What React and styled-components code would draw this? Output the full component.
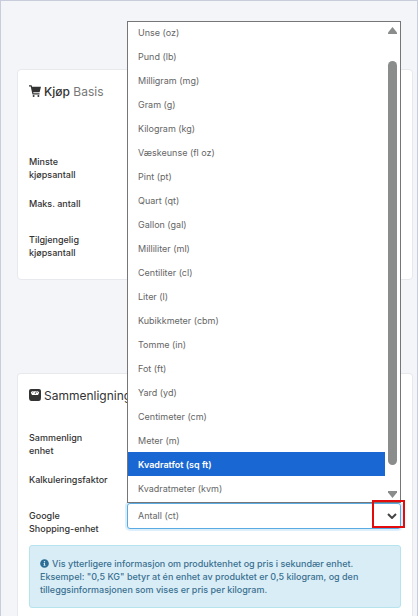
import React, { useState } from 'react';
import styled, { createGlobalStyle } from 'styled-components';
import { FaInfoCircle } from 'react-icons/fa';

const units = [
    'Unse (oz)',
    'Pund (lb)',
    'Milligram (mg)',
    'Gram (g)',
    'Kilogram (kg)',
    'Væskeunse (fl oz)',
    'Pint (pt)',
    'Quart (qt)',
    'Gallon (gal)',
    'Milliliter (ml)',
    'Centiliter (cl)',
    'Liter (l)',
    'Kubikkmeter (cbm)',
    'Tomme (in)',
    'Fot (ft)',
    'Yard (yd)',
    'Centimeter (cm)',
    'Meter (m)',
    'Kvadratfot (sq ft)',
    'Kvadratmeter (kvm)',
];

const CartIcon = () => (
    <svg width="12" height="12" viewBox="0 0 12 12" fill="#333" aria-hidden="true">
        <path d="M0 .3h2.600l.5 1.500H12L10.600 7.300H4.200l.3.900h6v1.200H3.500L1.700 1.500H0z" />
        <circle cx="4.600" cy="10.900" r="1" />
        <circle cx="9.400" cy="10.900" r="1" />
    </svg>
)

const ScaleIcon = () => (
    <svg width="12" height="12" viewBox="0 0 12 12" aria-hidden="true">
        <path d="M2 0h8a2 2 0 0 1 2 2v6.500Q12 12 9.500 12h-7Q0 12 0 8.500V2a2 2 0 0 1 2-2z" fill="#333" />
        <path d="M3 2.200h6l1.200 1.300L9 6H3L1.800 3.500z" fill="#fff" />
        <path d="M3.500 3.600l.9-.7M6 5l1.400-2.400M8 3l.7.600" stroke="#333" strokeWidth=".8" />
    </svg>
)

const App = () => {
    const [unit, setUnit] = useState('Antall (ct)');
    const [active, setActive] = useState('Kvadratfot (sq ft)');

    return (
        <Page>
            <GlobalStyle />
            <Card>
                <Title><CartIcon /><span><Strong>Kjøp</Strong> <Muted>Basis</Muted></span></Title>
                <Fields $top={48}>
                    <Row>
                        <Label htmlFor="min">Minste<br />kjøpsantall</Label>
                        <Input id="min" />
                    </Row>
                    <Row>
                        <Label htmlFor="max">Maks. antall</Label>
                        <Input id="max" />
                    </Row>
                    <Row>
                        <Label htmlFor="available">Tilgjengelig<br />kjøpsantall</Label>
                        <Input id="available" />
                    </Row>
                </Fields>
            </Card>
            <Card $last>
                <Title><ScaleIcon />Sammenligning</Title>
                <Fields $top={20}>
                    <Row>
                        <Label htmlFor="compare">Sammenlign<br />enhet</Label>
                        <Input id="compare" />
                    </Row>
                    <Row>
                        <Label htmlFor="factor">Kalkuleringsfaktor</Label>
                        <Input id="factor" />
                    </Row>
                    <Row>
                        <Label htmlFor="unit">Google<br />Shopping-enhet</Label>
                        <SelectWrap>
                            <Select id="unit" value={unit} onChange={(e) => setUnit(e.target.value)}>
                                <option>Antall (ct)</option>
                                {units.map((name) => <option key={name}>{name}</option>)}
                            </Select>
                            <Chevron viewBox="0 0 10 6" aria-hidden="true">
                                <path d="M1 1l4 4 4-4" fill="none" stroke="#444" strokeWidth="2" />
                            </Chevron>
                            <Popup>
                                <List role="listbox" aria-label="Google Shopping-enhet">
                                    {units.map((name) => (
                                        <Option
                                            key={name}
                                            role="option"
                                            aria-selected={name === active}
                                            $active={name === active}
                                            onMouseEnter={() => setActive(name)}
                                            onClick={() => setUnit(name)}
                                        >
                                            {name}
                                        </Option>
                                    ))}
                                </List>
                                <ScrollBar>
                                    <Arrow viewBox="0 0 9 7"><path d="M4.500 0L9 5.500V7H0V5.500z" /></Arrow>
                                    <Thumb />
                                    <Arrow viewBox="0 0 9 7"><path d="M4.500 7L9 1.500V0H0v1.500z" /></Arrow>
                                </ScrollBar>
                            </Popup>
                            <Marker />
                        </SelectWrap>
                    </Row>
                    <Info>
                        <InfoIcon />Vis ytterligere informasjon om produktenhet og pris i sekundær enhet.<br />
                        Eksempel: "0,5 KG" betyr at én enhet av produktet er 0,5 kilogram, og den<br />
                        tilleggsinformasjonen som vises er pris per kilogram.
                    </Info>
                </Fields>
            </Card>
        </Page>
    );
}

const GlobalStyle = createGlobalStyle`
* {
box-sizing: border-box;
}
body {
margin: 0;
font-family: Inter, "Liberation Sans", sans-serif;
font-size: 9px;
color: #333;
}
`
const Page = styled.main`
display: flex;
flex-direction: column;
gap: 93px;
min-height: 100vh;
padding: 68px 4px 0 16px;
border: 1px solid #c9cddb;
background: #f4f5f8;
`
const Card = styled.section`
padding: 11px 11px ${({ $last }) => ($last ? '8px' : '20px')};
border: 1px solid #e8e9ec;
border-radius: 4px;
background: #fff;
${({ $last }) => $last && `
flex: 1;
border-bottom: 0;
border-bottom-left-radius: 0;
border-bottom-right-radius: 0;
`}
`
const Title = styled.h2`
display: flex;
align-items: center;
gap: 3px;
height: 20px;
margin: 0;
font-size: 12px;
font-weight: 400;
white-space: nowrap;
`
const Strong = styled.span`
font-weight: 500;
`
const Muted = styled.span`
color: #777;
`
const Fields = styled.div`
display: flex;
flex-direction: column;
gap: 10px;
padding-top: ${({ $top }) => $top}px;
`
const Row = styled.div`
display: grid;
grid-template-columns: 98px 1fr;
align-items: start;
`
const Label = styled.label`
padding-top: 6px;
font-weight: 500;
line-height: 13px;
`
const Input = styled.input`
width: 100%;
height: 26px;
padding: 0 10px;
border: 1px solid #ccc;
border-radius: 3px;
font: inherit;
`
const SelectWrap = styled.div`
position: relative;
`
const Select = styled.select`
display: block;
appearance: none;
width: 100%;
height: 26px;
padding: 0 10px 2px;
border: 1px solid #5aabe3;
border-radius: 3px;
outline: none;
background: #fff;
box-shadow: 0 0 0 2px #dceffb;
font: inherit;
color: #666;
`
const Chevron = styled.svg`
position: absolute;
top: 10px;
right: 4px;
width: 10px;
height: 6px;
pointer-events: none;
`
const Popup = styled.div`
position: absolute;
bottom: 100%;
left: 0;
right: 0;
display: flex;
height: 482px;
border: 1px solid #767676;
background: #fff;
`
const List = styled.ul`
display: flex;
flex: 1;
flex-direction: column;
justify-content: flex-end;
margin: 0;
padding: 0 0 2px;
overflow: hidden;
list-style: none;
`
const Option = styled.li`
flex: none;
padding: 2px 10px 0;
line-height: 22px;
cursor: default;
color: ${({ $active }) => ($active ? '#fff' : '#666')};
background: ${({ $active }) => ($active ? '#1967d2' : 'transparent')};
font-weight: ${({ $active }) => ($active ? 600 : 400)};
`
const ScrollBar = styled.div`
display: flex;
flex-direction: column;
align-items: center;
justify-content: space-between;
width: 15px;
padding: 5px 0 4px;
`
const Arrow = styled.svg`
width: 9px;
height: 7px;
fill: #8b8d8c;
`
const Thumb = styled.div`
flex: 1;
width: 9px;
margin: 27px 0 26px;
border-radius: 5px;
background: #8b8d8c;
`
const Marker = styled.div`
position: absolute;
top: -3px;
right: -4px;
width: 33px;
height: 28px;
border: 2px solid #e30b0b;
pointer-events: none;
`
const Info = styled.p`
margin: 0;
padding: 11px 10px;
border: 1px solid #b5e3ee;
border-radius: 3px;
background: #d9edf7;
font-weight: 500;
line-height: 13px;
color: #3a7090;
`
const InfoIcon = styled(FaInfoCircle)`
margin-right: 3px;
vertical-align: -1px;
color: #2b6d94;
`
export default App;
